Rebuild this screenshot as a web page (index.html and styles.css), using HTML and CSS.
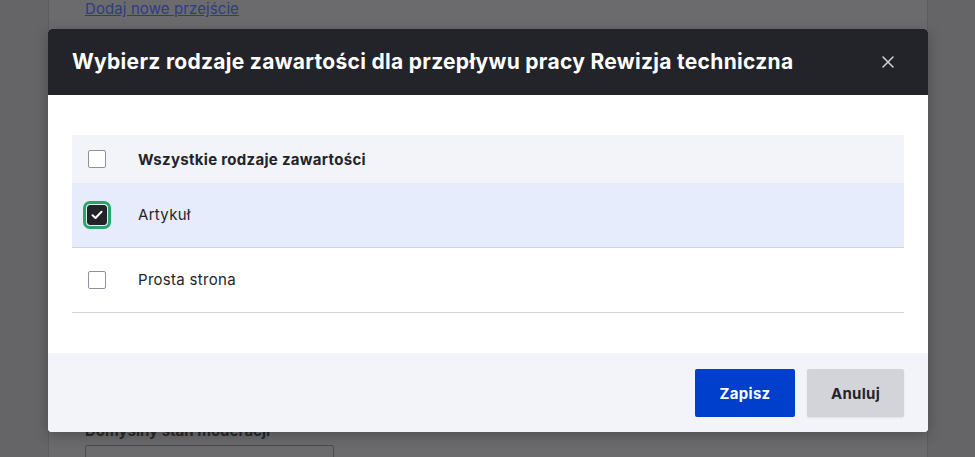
FILE: index.html
```html
<!DOCTYPE html>
<html lang="pl">
<head>
<meta charset="utf-8">
<title>Wybierz rodzaje zawartości</title>
<link rel="stylesheet" href="styles.css">
</head>
<body>
<div class="page">
  <main class="card">
    <a class="link" href="#">Dodaj nowe przejście</a>
    <div class="spacer"></div>
    <label class="field-label">Domyślny stan moderacji</label>
    <div class="select"></div>
  </main>
</div>

<div class="dialog" role="dialog">
  <header class="dialog-head">
    <h1 class="dialog-title">Wybierz rodzaje zawartości dla przepływu pracy Rewizja techniczna</h1>
    <span class="close" aria-label="Zamknij">
      <svg width="12" height="12" viewBox="0 0 12 12"><path d="M1 1L11 11M11 1L1 11" stroke="#d3d4d9" stroke-width="1.5" stroke-linecap="round"/></svg>
    </span>
  </header>
  <div class="dialog-body">
    <table class="types">
      <thead>
        <tr class="row-head">
          <th class="cell-check"><span class="cb"></span></th>
          <th class="cell-label">Wszystkie rodzaje zawartości</th>
        </tr>
      </thead>
      <tbody>
        <tr class="row selected">
          <td class="cell-check"><span class="cb checked">
            <svg width="12" height="10" viewBox="0 0 12 10"><path d="M1.5 5.2L4.5 8L10.5 1.8" fill="none" stroke="#fff" stroke-width="2" stroke-linecap="round" stroke-linejoin="round"/></svg>
          </span></td>
          <td class="cell-label">Artykuł</td>
        </tr>
        <tr class="row">
          <td class="cell-check"><span class="cb"></span></td>
          <td class="cell-label">Prosta strona</td>
        </tr>
      </tbody>
    </table>
  </div>
  <footer class="dialog-foot">
    <button class="btn primary">Zapisz</button>
    <button class="btn secondary">Anuluj</button>
  </footer>
</div>
</body>
</html>
```

FILE: styles.css
```css
* { box-sizing: border-box; }
html, body { margin: 0; height: 100%; }
body {
  background: #656567;
  font-family: Inter, "Noto Sans", "Liberation Sans", sans-serif;
  overflow: hidden;
}
.page {
  padding: 0 47px 0 48px;
  height: 100%;
}
.card {
  background: #6b6b6d;
  border-left: 1px solid #5d5d5f;
  border-right: 1px solid #5d5d5f;
  height: 100%;
  overflow: hidden;
  padding: 0 36px;
  display: flex;
  flex-direction: column;
}
.link {
  flex: none;
  color: #2f3c82;
  font-size: 15px;
  line-height: 17px;
  letter-spacing: 0.1px;
  text-decoration: underline;
  align-self: flex-start;
}
.spacer { flex: none; height: 405px; }
.field-label {
  flex: none;
  color: #29292b;
  font-weight: 700;
  font-size: 15px;
  line-height: 18px;
}
.select {
  flex: none;
  margin-top: 5px;
  width: 249px;
  height: 40px;
  border: 1px solid #4b4b4d;
  border-radius: 2px;
}

.dialog {
  position: absolute;
  left: 48px;
  top: 29px;
  width: 880px;
  height: 403px;
  border-radius: 4px;
  overflow: hidden;
  box-shadow: 0 4px 14px rgba(0,0,0,0.25);
  display: flex;
  flex-direction: column;
  background: #fff;
}
.dialog-head {
  background: #232429;
  height: 66px;
  flex: none;
  display: flex;
  align-items: center;
  justify-content: space-between;
  padding: 0 34px 0 24px;
}
.dialog-title {
  margin: 0;
  color: #fff;
  font-size: 21px;
  font-weight: 700;
  line-height: 26px;
  letter-spacing: 0.3px;
}
.close { display: flex; }
.dialog-body {
  flex: 1;
  padding: 40px 24px;
}
.types {
  width: 100%;
  border-collapse: collapse;
  color: #232429;
  font-size: 15px;
  letter-spacing: 0.3px;
}
.row-head { background: #f3f4f9; height: 48px; }
.row-head th { font-weight: 700; text-align: left; }
.row { height: 65px; border-bottom: 1px solid #d3d4d9; }
.row.selected { background: #e6ecfc; height: 64px; }
.cell-check { width: 50px; padding: 0 16px; vertical-align: middle; }
.cell-label { padding: 0 16px 0 15px; vertical-align: middle; text-align: left; }
.cb {
  display: flex;
  align-items: center;
  justify-content: center;
  width: 18px;
  height: 18px;
  border: 1px solid #8e929c;
  border-radius: 2px;
  background: #fff;
}
.cb.checked {
  width: 20px;
  height: 20px;
  margin-left: -1px;
  background: #232429;
  border-color: #232429;
  outline: 3px solid #26a769;
  outline-offset: 1px;
  border-radius: 3px;
}
.dialog-foot {
  background: #f3f4f9;
  height: 79px;
  flex: none;
  display: flex;
  justify-content: flex-end;
  align-items: flex-start;
  gap: 12px;
  padding: 16px 24px 0;
}
.btn {
  height: 48px;
  border: 0;
  border-radius: 2px;
  font-family: inherit;
  font-size: 15px;
  font-weight: 700;
  letter-spacing: 0.3px;
  padding: 0 16px;
}
.btn.primary { background: #003ecc; color: #fff; width: 100px; }
.btn.secondary { background: #d3d4d9; color: #232429; width: 97px; box-shadow: 0 1px 2px rgba(0,0,0,0.08); }
```
